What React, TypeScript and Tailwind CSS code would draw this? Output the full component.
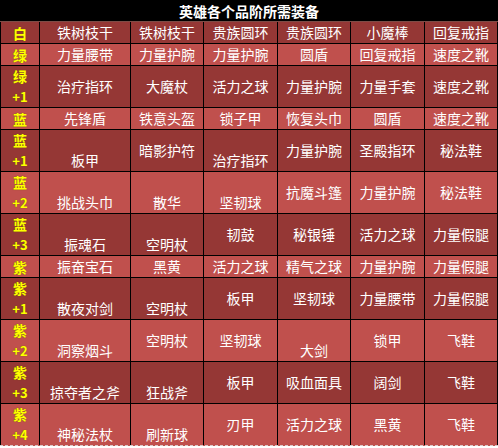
import React from 'react';

type Cell = [string, 'm' | 'b'];

interface Row {
  grade: string;
  plus?: string;
  tone: 'dark' | 'light';
  items: Cell[];
}

const m = (t: string): Cell => [t, 'm'];
const b = (t: string): Cell => [t, 'b'];

const rows: Row[] = [
  { grade: '白', tone: 'dark', items: ['铁树枝干', '铁树枝干', '贵族圆环', '贵族圆环', '小魔棒', '回复戒指'].map(m) },
  { grade: '绿', tone: 'light', items: ['力量腰带', '力量护腕', '力量护腕', '圆盾', '回复戒指', '速度之靴'].map(m) },
  { grade: '绿', plus: '+1', tone: 'dark', items: ['治疗指环', '大魔杖', '活力之球', '力量护腕', '力量手套', '速度之靴'].map(m) },
  { grade: '蓝', tone: 'light', items: ['先锋盾', '铁意头盔', '锁子甲', '恢复头巾', '圆盾', '速度之靴'].map(m) },
  { grade: '蓝', plus: '+1', tone: 'dark', items: [b('板甲'), m('暗影护符'), b('治疗指环'), m('力量护腕'), m('圣殿指环'), m('秘法鞋')] },
  { grade: '蓝', plus: '+2', tone: 'light', items: [b('挑战头巾'), b('散华'), b('坚韧球'), m('抗魔斗篷'), m('力量护腕'), m('秘法鞋')] },
  { grade: '蓝', plus: '+3', tone: 'dark', items: [b('振魂石'), b('空明杖'), m('韧鼓'), m('秘银锤'), m('活力之球'), m('力量假腿')] },
  { grade: '紫', tone: 'light', items: ['振奋宝石', '黑黄', '活力之球', '精气之球', '力量护腕', '力量假腿'].map(m) },
  { grade: '紫', plus: '+1', tone: 'dark', items: [b('散夜对剑'), b('空明杖'), m('板甲'), m('坚韧球'), m('力量腰带'), m('力量假腿')] },
  { grade: '紫', plus: '+2', tone: 'light', items: [b('洞察烟斗'), m('空明杖'), m('坚韧球'), b('大剑'), m('锁甲'), m('飞鞋')] },
  { grade: '紫', plus: '+3', tone: 'dark', items: [b('掠夺者之斧'), b('狂战斧'), m('板甲'), m('吸血面具'), m('阔剑'), m('飞鞋')] },
  { grade: '紫', plus: '+4', tone: 'light', items: [b('神秘法杖'), b('刷新球'), m('刃甲'), m('活力之球'), m('黑黄'), m('飞鞋')] },
];

export default function App() {
  return (
    <div
      className="w-[498px] h-[448px] bg-white text-[14px] text-white"
      style={{ fontFamily: '"Noto Sans CJK SC", "Noto Sans", sans-serif' }}
    >
      <div className="h-[22px] bg-black border-b border-[#7d4c46] flex items-center justify-center font-bold text-[14px] leading-none">
        英雄各个品阶所需装备
      </div>
      {rows.map((row, i) => {
        const last = i === rows.length - 1;
        const tall = !!row.plus;
        return (
          <div
            key={i}
            className={`grid grid-cols-[40px_91px_73px_74px_73px_74px_73px] ${tall ? 'h-[42px]' : 'h-[22px]'} ${
              row.tone === 'dark' ? 'bg-[#953735]' : 'bg-[#c0504d]'
            } ${last ? 'border-b border-dashed border-[#d9c9c9]' : 'border-b border-black'}`}
          >
            <div className="border-l border-r border-black flex flex-col items-center justify-around font-bold text-[#ffff00] leading-[20px] [text-shadow:0_0_1px_#6b5a00]">
              <span>{row.grade}</span>
              {row.plus && <span className="text-[13px]">{row.plus}</span>}
            </div>
            {row.items.map(([text, pos], j) => (
              <div
                key={j}
                className={`border-r border-black flex justify-center leading-[21px] whitespace-nowrap ${
                  pos === 'b' ? 'items-end' : 'items-center'
                }`}
              >
                {text}
              </div>
            ))}
          </div>
        );
      })}
    </div>
  );
}
